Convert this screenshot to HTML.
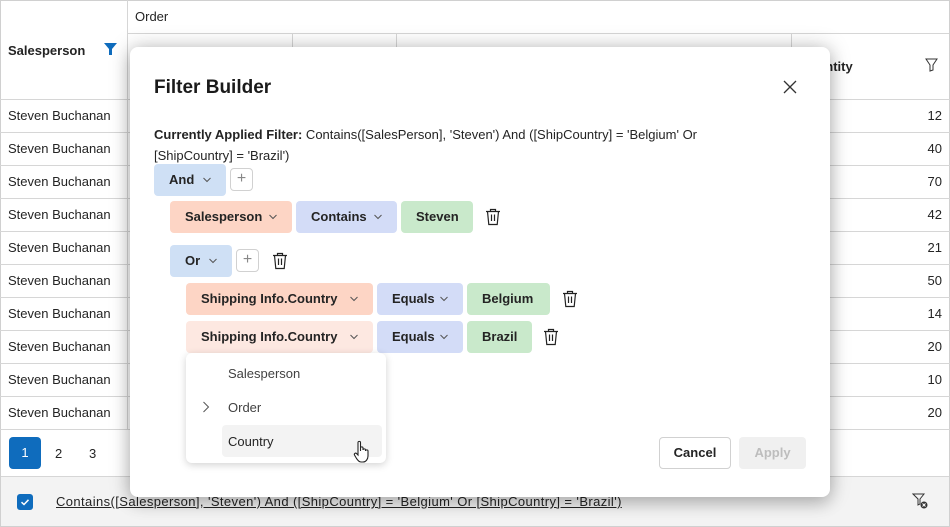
<!DOCTYPE html>
<html><head><meta charset="utf-8"><style>
*{box-sizing:border-box;margin:0;padding:0}
body{width:950px;height:527px;overflow:hidden;background:#fff;font-family:"Liberation Sans",sans-serif;font-size:13px;color:#242424;position:relative}
.a{position:absolute}
.hl{position:absolute;height:1px;background:#d6d6d6}
.vl{position:absolute;width:1px;background:#d6d6d6}
.cell{position:absolute;left:8px;font-size:13px}
.num{position:absolute;right:8px;font-size:13px}
.chip{position:absolute;height:32px;border-radius:4px;font-weight:bold;font-size:13px;line-height:32px;padding-left:15px}
.chip svg{position:absolute;top:13px}
.pl{position:absolute;width:23px;height:23px;border:1px solid #d1d1d1;border-radius:4px;color:#888;text-align:center;line-height:19px;font-size:16px}
.tr{position:absolute}
</style></head><body>
<div class="a" style="left:0;top:0;width:950px;height:527px;border:1px solid #d0d0d0"></div>
<div class="vl" style="left:127px;top:0;height:429px"></div>
<div class="hl" style="left:127px;top:33px;width:822px"></div>
<div class="vl" style="left:292px;top:33px;height:66px"></div>
<div class="vl" style="left:396px;top:33px;height:66px"></div>
<div class="vl" style="left:791px;top:33px;height:66px"></div>
<div class="a" style="left:135px;top:9px">Order</div>
<div class="a" style="left:8px;top:43px;font-weight:bold">Salesperson</div>
<svg class="a" style="left:104px;top:43px" width="13" height="12" viewBox="0 0 13 12"><path d="M0 0H13L8 6V12H5V6Z" fill="#0f6cbd"/></svg>
<div class="a" style="left:800px;top:59px;font-weight:bold">Quantity</div>
<svg class="a" style="left:925px;top:58px" width="13" height="14" viewBox="0 0 13 14"><path d="M1 1H12L8 7V12L5 13V7Z" fill="none" stroke="#333"/></svg>
<div id="rows"></div>
<script>
var v=[12,40,70,42,21,50,14,20,10,20],h='';
for(var i=0;i<10;i++){var y=99+i*33;h+='<div class="hl" style="left:0;top:'+y+'px;width:950px"></div><div class="cell" style="top:'+(y+9)+'px">Steven Buchanan</div><div class="num" style="top:'+(y+9)+'px">'+v[i]+'</div>';}
h+='<div class="hl" style="left:0;top:429px;width:950px"></div>';
document.getElementById('rows').innerHTML=h;
</script>
<div class="a" style="left:9px;top:437px;width:32px;height:32px;background:#0f6cbd;border-radius:4px;color:#fff;text-align:center;line-height:32px">1</div>
<div class="a" style="left:55px;top:446px">2</div>
<div class="a" style="left:89px;top:446px">3</div>
<div class="a" style="left:1px;top:476px;width:948px;height:50px;background:#f3f3f3;border-top:1px solid #d6d6d6"></div>
<div class="a" style="left:17px;top:494px;width:16px;height:16px;background:#0f6cbd;border-radius:3px"><svg width="16" height="16"><path d="M4.5 8.2L7 10.5L11.5 5.8" stroke="#fff" stroke-width="1.5" fill="none"/></svg></div>
<div class="a" style="left:56px;top:494px;text-decoration:underline;letter-spacing:0.4px">Contains([Salesperson], 'Steven') And ([ShipCountry] = 'Belgium' Or [ShipCountry] = 'Brazil')</div>
<svg class="a" style="left:912px;top:493px" width="16" height="16" viewBox="0 0 16 16"><path d="M1 1H12L8 6V11L6 12V6Z" fill="none" stroke="#333"/><circle cx="12" cy="12" r="3.5" fill="#333"/><path d="M10.5 10.5l3 3M13.5 10.5l-3 3" stroke="#fff"/></svg>

<div class="a" style="left:130px;top:47px;width:700px;height:450px;background:#fff;border-radius:8px;box-shadow:0 0 20px rgba(0,0,0,.25),0 8px 16px rgba(0,0,0,.15)"></div>
<div class="a" style="left:154px;top:77px;font-size:19px;font-weight:bold;color:#1a1a1a">Filter Builder</div>
<svg class="a" style="left:783px;top:80px" width="14" height="14"><path d="M1 1L13 13M13 1L1 13" stroke="#333" stroke-width="1.3"/></svg>
<div class="a" style="left:154px;top:124px;width:600px;line-height:21px"><b>Currently Applied Filter:</b> Contains([SalesPerson], 'Steven') And ([ShipCountry] = 'Belgium' Or [ShipCountry] = 'Brazil')</div>

<div class="chip" style="left:154px;top:164px;width:72px;background:#cfe0f5">And<svg style="left:49px" width="8" height="6"><path d="M0.5 1L4 4.5L7.5 1" stroke="#555" fill="none"/></svg></div>
<div class="pl" style="left:230px;top:168px">+</div>

<div class="chip" style="left:170px;top:201px;width:122px;background:#fdd5c5">Salesperson<svg style="left:99px" width="8" height="6"><path d="M0.5 1L4 4.5L7.5 1" stroke="#555" fill="none"/></svg></div>
<div class="chip" style="left:296px;top:201px;width:101px;background:#d3dcf7">Contains<svg style="left:78px" width="8" height="6"><path d="M0.5 1L4 4.5L7.5 1" stroke="#555" fill="none"/></svg></div>
<div class="chip" style="left:401px;top:201px;width:72px;background:#c9e9cb">Steven</div>

<div class="chip" style="left:170px;top:245px;width:62px;background:#cfe0f5">Or<svg style="left:39px" width="8" height="6"><path d="M0.5 1L4 4.5L7.5 1" stroke="#555" fill="none"/></svg></div>
<div class="pl" style="left:236px;top:249px">+</div>

<div class="chip" style="left:186px;top:283px;width:187px;background:#fdd5c5">Shipping Info.Country<svg style="left:164px" width="8" height="6"><path d="M0.5 1L4 4.5L7.5 1" stroke="#555" fill="none"/></svg></div>
<div class="chip" style="left:377px;top:283px;width:86px;background:#d3dcf7">Equals<svg style="left:63px" width="8" height="6"><path d="M0.5 1L4 4.5L7.5 1" stroke="#555" fill="none"/></svg></div>
<div class="chip" style="left:467px;top:283px;width:83px;background:#c9e9cb">Belgium</div>

<div class="chip" style="left:186px;top:321px;width:187px;background:#fde8e1">Shipping Info.Country<svg style="left:164px" width="8" height="6"><path d="M0.5 1L4 4.5L7.5 1" stroke="#555" fill="none"/></svg></div>
<div class="chip" style="left:377px;top:321px;width:86px;background:#d3dcf7">Equals<svg style="left:63px" width="8" height="6"><path d="M0.5 1L4 4.5L7.5 1" stroke="#555" fill="none"/></svg></div>
<div class="chip" style="left:467px;top:321px;width:65px;background:#c9e9cb">Brazil</div>

<svg class="tr" style="left:485px;top:208px" width="16" height="18" viewBox="0 0 16 18"><path d="M1 3.5H15M5.5 3.5V1.5H10.5V3.5M2.5 3.5L3.8 16.5H12.2L13.5 3.5M6.5 6.5V13M9.5 6.5V13" stroke="#222" stroke-width="1.2" fill="none"/></svg>
<svg class="tr" style="left:272px;top:252px" width="16" height="18" viewBox="0 0 16 18"><path d="M1 3.5H15M5.5 3.5V1.5H10.5V3.5M2.5 3.5L3.8 16.5H12.2L13.5 3.5M6.5 6.5V13M9.5 6.5V13" stroke="#222" stroke-width="1.2" fill="none"/></svg>
<svg class="tr" style="left:562px;top:290px" width="16" height="18" viewBox="0 0 16 18"><path d="M1 3.5H15M5.5 3.5V1.5H10.5V3.5M2.5 3.5L3.8 16.5H12.2L13.5 3.5M6.5 6.5V13M9.5 6.5V13" stroke="#222" stroke-width="1.2" fill="none"/></svg>
<svg class="tr" style="left:543px;top:328px" width="16" height="18" viewBox="0 0 16 18"><path d="M1 3.5H15M5.5 3.5V1.5H10.5V3.5M2.5 3.5L3.8 16.5H12.2L13.5 3.5M6.5 6.5V13M9.5 6.5V13" stroke="#222" stroke-width="1.2" fill="none"/></svg>

<div class="a" style="left:186px;top:353px;width:200px;height:110px;background:#fff;border-radius:6px;box-shadow:0 2px 8px rgba(0,0,0,.18)"></div>
<div class="a" style="left:228px;top:366px;color:#424242">Salesperson</div>
<svg class="a" style="left:202px;top:401px" width="8" height="12"><path d="M1.5 1L6.5 6L1.5 11" stroke="#555" fill="none"/></svg>
<div class="a" style="left:228px;top:400px;color:#424242">Order</div>
<div class="a" style="left:222px;top:425px;width:160px;height:32px;background:#f3f3f3;border-radius:4px"></div>
<div class="a" style="left:228px;top:434px">Country</div>
<svg class="a" style="left:353px;top:440px" width="20" height="24" viewBox="0 0 20 24"><path d="M5 2.5C5 1 7.5 1 7.5 2.5V11V8C7.5 6.5 10 6.5 10 8V10C10 8.5 12.5 8.5 12.5 10V11C12.5 9.5 15 9.5 15 11V16C15 19 13 22 10 22H8C6 22 5 20.5 3.5 18.5L1.5 15C0.8 13.8 2.5 12.5 3.5 13.5L5 15Z" fill="#fff" stroke="#222" stroke-width="1.1"/></svg>

<div class="a" style="left:659px;top:437px;width:72px;height:32px;border:1px solid #d1d1d1;border-radius:4px;font-weight:bold;text-align:center;line-height:30px">Cancel</div>
<div class="a" style="left:739px;top:437px;width:67px;height:32px;background:#f0f0f0;border-radius:4px;font-weight:bold;text-align:center;line-height:32px;color:#bdbdbd">Apply</div>
</body></html>
